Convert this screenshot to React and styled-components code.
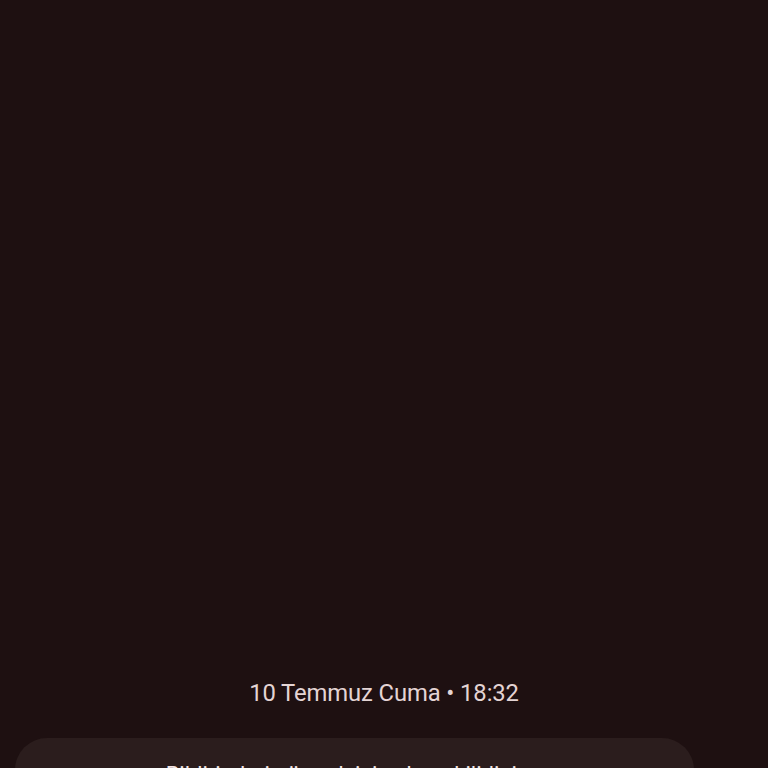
import React from 'react';
import styled, { createGlobalStyle } from 'styled-components';

const GlobalStyle = createGlobalStyle`
  html, body {
    margin: 0;
    padding: 0;
    background: #1e1011;
  }
  body {
    font-family: Roboto, "Noto Sans", sans-serif;
  }
`

const Screen = styled.div`
  height: 100vh;
  overflow: hidden;
  display: flex;
  flex-direction: column;
  justify-content: flex-end;
  background: #1e1011;
`

const DateLine = styled.div`
  text-align: center;
  font-size: 23.8px;
  line-height: 1.2;
  color: #e4d4d4;
  letter-spacing: -0.1px;
`

const Card = styled.section`
  margin: 30px 0 -60px 15px;
  width: 679px;
  height: 90px;
  box-sizing: border-box;
  padding: 23px 0 0 20px;
  border-radius: 32px 32px 0 0;
  background: #2b1d1d;
`

const CardText = styled.p`
  margin: 0;
  text-align: center;
  font-size: 22px;
  line-height: 28px;
  color: #f2e4e4;
`

const App = () => {
  return (
    <>
      <GlobalStyle />
      <Screen>
        <DateLine>10 Temmuz Cuma • 18:32</DateLine>
        <Card>
          <CardText>Bildirimleri görmek için ekran kilidini açın</CardText>
        </Card>
      </Screen>
    </>
  )
}

export default App;
